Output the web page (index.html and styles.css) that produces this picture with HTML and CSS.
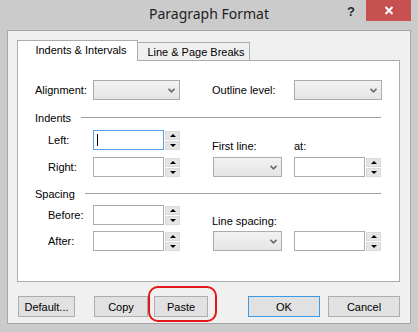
FILE: index.html
```html
<!DOCTYPE html>
<html lang="en">
<head>
    <meta charset="UTF-8">
    <title>Paragraph Format</title>
    <link rel="stylesheet" href="styles.css">
</head>
<body>
    <div class="window">
        <div class="titlebar">
            <div></div>
            <div class="title">Paragraph Format</div>
            <div class="controls">
                <span class="help">?</span>
                <span class="close">
                    <svg width="10" height="9" viewBox="0 0 10 9"><path d="M1.5 1 L8.5 8 M8.5 1 L1.5 8" stroke="#fff" stroke-width="2"/></svg>
                </span>
            </div>
        </div>

        <div class="client">
            <div class="tabs">
                <div class="tab active">Indents &amp; Intervals</div>
                <div class="tab">Line &amp; Page Breaks</div>
            </div>

            <div class="panel">
                <div class="grid top-row">
                    <label class="lbl">Alignment:</label>
                    <div class="combo wide"><svg class="chev" width="7" height="5" viewBox="0 0 7 5"><path d="M0.5 0.8 L3.5 3.8 L6.5 0.8" fill="none" stroke="#6a6a6a" stroke-width="1.6"/></svg></div>
                    <label class="lbl-r">Outline level:</label>
                    <div class="combo wide2"><svg class="chev" width="7" height="5" viewBox="0 0 7 5"><path d="M0.5 0.8 L3.5 3.8 L6.5 0.8" fill="none" stroke="#6a6a6a" stroke-width="1.6"/></svg></div>
                </div>

                <div class="group-head"><span>Indents</span><span class="rule"></span></div>
                <div class="grid group indents">
                    <label class="lbl sub">Left:</label>
                    <div class="num"><div class="field focus"><span class="caret"></span></div><div class="spin"><span class="up"></span><span class="down"></span></div></div>
                    <label class="lbl-r above">First line:</label>
                    <label class="lbl-r above">at:</label>
                    <label class="lbl sub">Right:</label>
                    <div class="num"><div class="field"></div><div class="spin"><span class="up"></span><span class="down"></span></div></div>
                    <div class="combo small"><svg class="chev" width="7" height="5" viewBox="0 0 7 5"><path d="M0.5 0.8 L3.5 3.8 L6.5 0.8" fill="none" stroke="#6a6a6a" stroke-width="1.6"/></svg></div>
                    <div class="num"><div class="field"></div><div class="spin"><span class="up"></span><span class="down"></span></div></div>
                </div>

                <div class="group-head spacing-head"><span>Spacing</span><span class="rule"></span></div>
                <div class="grid group spacing">
                    <label class="lbl sub">Before:</label>
                    <div class="num"><div class="field"></div><div class="spin"><span class="up"></span><span class="down"></span></div></div>
                    <label class="lbl-r above span2">Line spacing:</label>
                    <label class="lbl sub">After:</label>
                    <div class="num"><div class="field"></div><div class="spin"><span class="up"></span><span class="down"></span></div></div>
                    <div class="combo small"><svg class="chev" width="7" height="5" viewBox="0 0 7 5"><path d="M0.5 0.8 L3.5 3.8 L6.5 0.8" fill="none" stroke="#6a6a6a" stroke-width="1.6"/></svg></div>
                    <div class="num"><div class="field"></div><div class="spin"><span class="up"></span><span class="down"></span></div></div>
                </div>
            </div>

            <div class="footer">
                <button class="btn default-btn">Default...</button>
                <button class="btn copy-btn">Copy</button>
                <button class="btn paste-btn">Paste<span class="mark"></span></button>
                <span class="spacer"></span>
                <button class="btn ok-btn">OK</button>
                <button class="btn cancel-btn">Cancel</button>
            </div>
        </div>
    </div>
</body>
</html>
```

FILE: styles.css
```css
body {
    margin: 0;
    font-family: "Liberation Sans", Arial, sans-serif;
    font-size: 11px;
    color: #000;
}
.window {
    width: 418px;
    height: 332px;
    box-sizing: border-box;
    background-color: #cbcbcb;
    padding: 0 7px 8px;
}
.titlebar {
    height: 30px;
    display: grid;
    grid-template-columns: 1fr auto 1fr;
    margin: 0 -7px;
}
.title {
    font-family: "Noto Sans", sans-serif;
    font-size: 14px;
    line-height: 28px;
    color: #1e1e1e;
}
.controls {
    display: flex;
    justify-content: flex-end;
    align-items: flex-start;
}
.help {
    font-family: "Liberation Sans", sans-serif;
    font-weight: bold;
    font-size: 13px;
    color: #2a2a2a;
    margin-top: 4px;
    margin-right: 11px;
}
.close {
    width: 45px;
    height: 21px;
    background-color: #c75050;
    margin-right: 7px;
    display: flex;
    align-items: center;
    justify-content: center;
}
.client {
    height: 294px;
    box-sizing: border-box;
    border: 1px solid #a8a8a8;
    background-color: #f0f0f0;
    padding: 9px 10px 0 9px;
}
.tabs {
    display: flex;
    align-items: flex-end;
    height: 20px;
}
.tab {
    box-sizing: border-box;
    height: 18px;
    width: 112px;
    border: 1px solid #acacac;
    border-bottom: none;
    border-left: none;
    background-color: #f0f0f0;
    text-align: center;
    line-height: 18px;
    padding-left: 5px;
}
.tab.active {
    height: 21px;
    width: 121px;
    background-color: #fff;
    border-left: 1px solid #acacac;
    margin-bottom: -1px;
    position: relative;
    z-index: 1;
    line-height: 19px;
    padding-left: 7px;
}
.panel {
    height: 222px;
    box-sizing: border-box;
    border: 1px solid #acacac;
    background-color: #fff;
    padding-top: 19px;
}
.grid {
    display: grid;
    grid-template-columns: 75px 119px 82px 1fr;
    grid-auto-rows: 20px;
    align-items: center;
}
.lbl {
    padding-left: 17px;
}
.lbl.sub {
    padding-left: 30px;
}
.lbl-r.above {
    align-self: end;
    margin-bottom: -3px;
    line-height: 13px;
}
.indents {
    row-gap: 7px;
    margin-top: 6px;
}
.spacing {
    row-gap: 6px;
    margin-top: 5px;
}
.span2 {
    grid-column: 3 / span 2;
}
.group-head {
    display: flex;
    align-items: center;
    height: 13px;
    margin-top: 11px;
    padding-left: 17px;
    margin-right: 18px;
}
.spacing-head {
    margin-top: 10px;
}
.rule {
    flex: 1;
    height: 1px;
    background-color: #a0a0a0;
    margin-left: 10px;
}
.combo {
    height: 20px;
    box-sizing: border-box;
    border: 1px solid #acacac;
    background: linear-gradient(#f2f2f2, #e5e5e5);
    display: flex;
    align-items: center;
    justify-content: flex-end;
    padding-right: 4px;
}
.combo.wide {
    width: 87px;
}
.combo.wide2 {
    width: 88px;
}
.combo.small {
    width: 69px;
    margin-left: 1px;
}
.num {
    display: flex;
    align-items: center;
}
.field {
    width: 71px;
    height: 20px;
    box-sizing: border-box;
    border: 1px solid #acacac;
    background-color: #fff;
    display: flex;
    align-items: center;
}
.field.focus {
    border-color: #569de5;
}
.caret {
    width: 1px;
    height: 12px;
    background-color: #000;
    margin-left: 3px;
}
.spin {
    display: flex;
    flex-direction: column;
    gap: 1px;
    margin-left: 1px;
}
.spin span {
    width: 15px;
    height: 9px;
    box-sizing: border-box;
    border: 1px solid #dadada;
    background-color: #e5e5e5;
    display: flex;
    align-items: center;
    justify-content: center;
}
.spin .up::after {
    content: "";
    border-left: 3px solid transparent;
    border-right: 3px solid transparent;
    border-bottom: 3px solid #000;
}
.spin .down::after {
    content: "";
    border-left: 3px solid transparent;
    border-right: 3px solid transparent;
    border-top: 3px solid #000;
}
.footer {
    display: flex;
    margin-top: 14px;
    padding-left: 1px;
}
.btn {
    font-family: "Liberation Sans", Arial, sans-serif;
    font-size: 11px;
    color: #000;
    height: 21px;
    box-sizing: border-box;
    border: 1px solid #adadad;
    background-color: #e1e1e1;
    padding: 0;
}
.default-btn {
    width: 57px;
}
.copy-btn {
    width: 54px;
    margin-left: 19px;
}
.paste-btn {
    width: 54px;
    margin-left: 6px;
    position: relative;
}
.mark {
    position: absolute;
    left: -7px;
    top: -11px;
    width: 69px;
    height: 36px;
    box-sizing: border-box;
    border: 2px solid #e3161b;
    border-radius: 10px;
}
.spacer {
    flex: 1;
}
.ok-btn {
    width: 72px;
    border-color: #3c9be6;
}
.cancel-btn {
    width: 72px;
    margin-left: 8px;
}
```
